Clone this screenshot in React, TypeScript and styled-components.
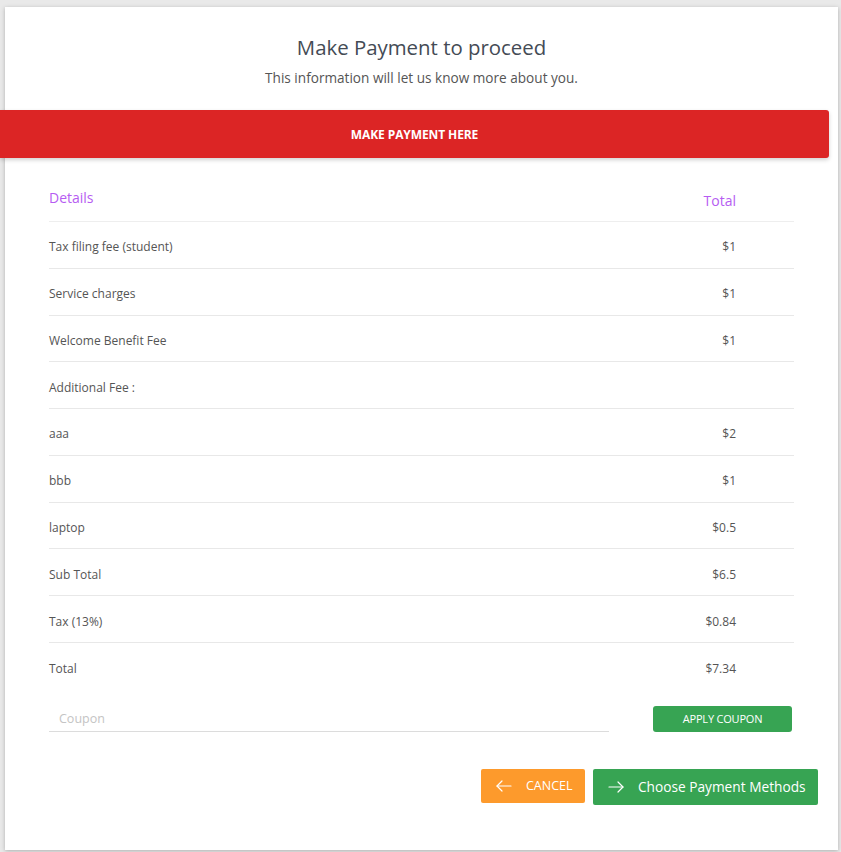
import React from "react";
import styled, { createGlobalStyle } from "styled-components";

const Global = createGlobalStyle`
  html, body { margin: 0; padding: 0; }
  body {
    background: #e9e9e9;
    font-family: "Open Sans", "Noto Sans", sans-serif;
    color: #555;
  }
`;

const Page = styled.div`
  padding: 7px 3px 2px 5px;
`;

const Card = styled.div`
  background: #fff;
  box-shadow: 0 1px 4px rgba(0, 0, 0, 0.25);
  height: 843px;
  box-sizing: border-box;
  padding-top: 26px;
  display: flex;
  flex-direction: column;
`;

const Title = styled.h1`
  margin: 0;
  text-align: center;
  font-weight: 400;
  font-size: 20.4px;
  line-height: 28px;
  color: #444b55;
`;

const Subtitle = styled.p`
  margin: 6px 0 0;
  text-align: center;
  font-size: 13.6px;
  line-height: 22px;
  color: #555;
`;

const Banner = styled.div`
  margin: 21px 9px 0 -5px;
  height: 48px;
  background: #dc2525;
  border-radius: 0 3px 3px 0;
  box-shadow: 0 2px 4px rgba(0, 0, 0, 0.18);
  display: flex;
  align-items: center;
  justify-content: center;
  color: #fff;
  font-weight: 700;
  font-size: 12px;
  letter-spacing: -0.1px;
`;

const Table = styled.div`
  margin: 30px 44px 0;
  display: flex;
  flex-direction: column;
`;

const HeadRow = styled.div`
  display: flex;
  justify-content: space-between;
  height: 33px;
  border-bottom: 1px solid #eeeeee;
  color: #b65cf2;
  font-size: 14px;
`;

const HeadCell = styled.span<{ $right?: boolean }>`
  ${(p) => (p.$right ? "margin-top: 3px; margin-right: 58px;" : "margin-top: 0;")}
`;

const Row = styled.div`
  display: flex;
  justify-content: space-between;
  align-items: center;
  box-sizing: border-box;
  height: 46.78px;
  padding-top: 4px;
  border-bottom: 1px solid #e8e8e8;
  font-size: 12px;
  color: #555;
`;

const LastRow = styled(Row)`
  border-bottom: none;
`;

const Amount = styled.span`
  margin-right: 58px;
`;

const CouponRow = styled.div`
  display: flex;
  align-items: flex-end;
  justify-content: space-between;
  margin: 16px 46px 0 44px;
`;

const CouponInput = styled.input`
  width: 560px;
  box-sizing: border-box;
  border: none;
  border-bottom: 1px solid #dcdcdc;
  outline: none;
  font-family: inherit;
  font-size: 12.5px;
  padding: 3px 10px 3px;
  height: 26px;
  color: #555;
  &::placeholder { color: #c4c4c4; }
`;

const ApplyButton = styled.button`
  width: 139px;
  height: 26px;
  border: none;
  border-radius: 3px;
  background: #37a453;
  color: #fff;
  font-family: inherit;
  font-size: 11px;
  letter-spacing: -0.2px;
  cursor: pointer;
`;

const Footer = styled.div`
  display: flex;
  justify-content: flex-end;
  align-items: flex-start;
  gap: 8px;
  margin: 37px 20px 0 0;
`;

const ActionButton = styled.button<{ $variant: "cancel" | "go" }>`
  display: flex;
  align-items: center;
  white-space: nowrap;
  border: none;
  border-radius: 2px;
  color: #fff;
  font-family: inherit;
  cursor: pointer;
  background: ${(p) => (p.$variant === "cancel" ? "#fd9a2c" : "#37a453")};
  height: ${(p) => (p.$variant === "cancel" ? "34px" : "36px")};
  width: ${(p) => (p.$variant === "cancel" ? "104px" : "225px")};
  font-size: ${(p) => (p.$variant === "cancel" ? "12.5px" : "13.7px")};
  padding: 0 0 0 15px;
  gap: 14px;
`;

const Arrow = ({ dir }: { dir: "left" | "right" }) => (
  <svg width="16" height="12" viewBox="0 0 16 12" fill="none" stroke="#fff" strokeWidth="1.2" strokeLinecap="round" strokeLinejoin="round">
    {dir === "left" ? (
      <>
        <path d="M15 6H1" />
        <path d="M6 1L1 6l5 5" />
      </>
    ) : (
      <>
        <path d="M1 6h14" />
        <path d="M10 1l5 5-5 5" />
      </>
    )}
  </svg>
);

const items: [string, string][] = [
  ["Tax filing fee (student)", "$1"],
  ["Service charges", "$1"],
  ["Welcome Benefit Fee", "$1"],
  ["Additional Fee :", ""],
  ["aaa", "$2"],
  ["bbb", "$1"],
  ["laptop", "$0.5"],
  ["Sub Total", "$6.5"],
  ["Tax (13%)", "$0.84"],
];

export default function App() {
  return (
    <>
      <Global />
      <Page>
        <Card>
          <Title>Make Payment to proceed</Title>
          <Subtitle>This information will let us know more about you.</Subtitle>
          <Banner>MAKE PAYMENT HERE</Banner>
          <Table>
            <HeadRow>
              <HeadCell>Details</HeadCell>
              <HeadCell $right>Total</HeadCell>
            </HeadRow>
            {items.map(([label, amt]) => (
              <Row key={label}>
                <span>{label}</span>
                <Amount>{amt}</Amount>
              </Row>
            ))}
            <LastRow>
              <span>Total</span>
              <Amount>$7.34</Amount>
            </LastRow>
          </Table>
          <CouponRow>
            <CouponInput placeholder="Coupon" />
            <ApplyButton>APPLY COUPON</ApplyButton>
          </CouponRow>
          <Footer>
            <ActionButton $variant="cancel">
              <Arrow dir="left" />
              CANCEL
            </ActionButton>
            <ActionButton $variant="go">
              <Arrow dir="right" />
              Choose Payment Methods
            </ActionButton>
          </Footer>
        </Card>
      </Page>
    </>
  );
}
